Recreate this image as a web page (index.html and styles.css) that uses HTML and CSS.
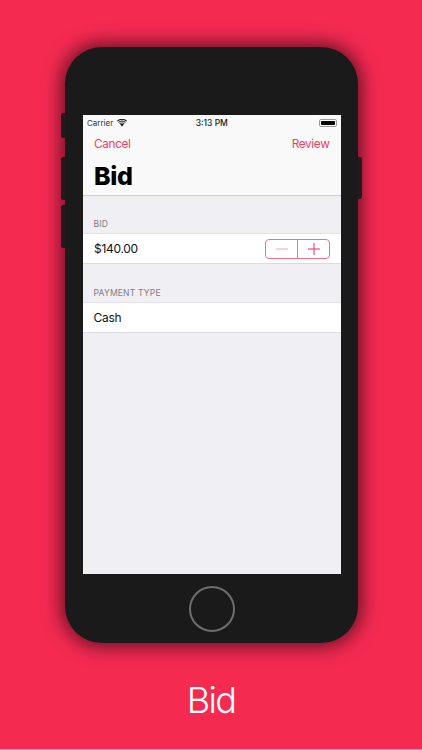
FILE: index.html
```html
<!DOCTYPE html>
<html lang="en">
<head>
<meta charset="utf-8">
<title>Bid</title>
<link rel="stylesheet" href="styles.css">
</head>
<body>
<main class="stage">
  <div class="phone">
    <span class="side side-mute"></span>
    <span class="side side-up"></span>
    <span class="side side-down"></span>
    <span class="side side-power"></span>
    <div class="screen">
      <header class="topbar">
        <div class="status">
          <div class="status-left">
            <span>Carrier</span>
            <svg class="wifi" viewBox="0 0 12 9" width="10" height="8" aria-hidden="true">
              <path d="M6 8.8 3.9 6.3a3.2 3.2 0 0 1 4.2 0z" fill="#111"/>
              <path d="M2.9 5.1a4.8 4.8 0 0 1 6.2 0l-.7.8a3.7 3.7 0 0 0-4.8 0z" fill="#111"/>
              <path d="M1.4 3.4a7 7 0 0 1 9.2 0l-.8.9a5.8 5.8 0 0 0-7.6 0z" fill="#111"/>
              <path d="M0 1.8a9.1 9.1 0 0 1 12 0l-.7.9a8 8 0 0 0-10.6 0z" fill="#111"/>
            </svg>
          </div>
          <span class="time">3:13 PM</span>
          <div class="status-right">
            <span class="battery"><span class="battery-fill"></span></span>
          </div>
        </div>
        <nav class="nav">
          <a class="link">Cancel</a>
          <a class="link">Review</a>
        </nav>
        <h1 class="title">Bid</h1>
      </header>
      <section class="section section-first">
        <h2 class="section-label">BID</h2>
        <div class="row">
          <span class="row-text row-text-bid">$140.00</span>
          <div class="stepper">
            <span class="step">
              <svg viewBox="0 0 12 12" width="12" height="12" aria-hidden="true"><path d="M0 6h12" stroke="#f4a3b5" stroke-width="1" fill="none"/></svg>
            </span>
            <span class="step step-plus">
              <svg viewBox="0 0 12 12" width="12" height="12" aria-hidden="true"><path d="M0 6h12M6 0v12" stroke="#e8305a" stroke-width="1" fill="none"/></svg>
            </span>
          </div>
        </div>
      </section>
      <section class="section section-second">
        <h2 class="section-label">PAYMENT TYPE</h2>
        <div class="row">
          <span class="row-text">Cash</span>
        </div>
      </section>
    </div>
    <div class="home-area"><span class="home"></span></div>
  </div>
  <p class="caption">Bid</p>
</main>
</body>
</html>
```
FILE: styles.css
```css
* { box-sizing: border-box; }
html, body { margin: 0; padding: 0; }
body {
  width: 422px;
  height: 750px;
  overflow: hidden;
  font-family: Inter, "Liberation Sans", sans-serif;
}
.stage {
  width: 422px;
  height: 750px;
  background: #f42a51;
  padding-top: 47px;
  display: flex;
  flex-direction: column;
  align-items: flex-start;
  border-bottom: 1px solid #c9b9be;
}
.phone {
  position: relative;
  width: 293px;
  height: 596px;
  margin-left: 65px;
  padding: 68px 17.5px 0;
  background: #1a1a1a;
  border-radius: 37px;
  box-shadow: 0 0 18px 4px rgba(50, 8, 22, .72);
  display: flex;
  flex-direction: column;
}
.side {
  position: absolute;
  background: #241a1d;
  width: 4px;
}
.side-mute { left: -4px; top: 66px; height: 25px; border-radius: 2px 0 0 2px; }
.side-up { left: -4px; top: 110px; height: 43px; border-radius: 2px 0 0 2px; }
.side-down { left: -4px; top: 158px; height: 43px; border-radius: 2px 0 0 2px; }
.side-power { right: -3.5px; top: 110px; height: 42px; border-radius: 0 2px 2px 0; }
.screen {
  height: 459px;
  background: #efeff4;
  display: flex;
  flex-direction: column;
  flex: none;
}
.topbar {
  height: 81px;
  background: #f9f9f9;
  border-bottom: 1px solid #c9c9ce;
  flex: none;
}
.status {
  height: 15px;
  padding: 0 4px 0 4.5px;
  display: grid;
  grid-template-columns: 1fr auto 1fr;
  align-items: center;
  font-size: 8px;
  color: #333;
}
.status-left { display: flex; align-items: center; gap: 4px; }
.time { font-size: 8.5px; font-weight: 500; color: #222; }
.status-right { display: flex; justify-content: flex-end; }
.battery {
  width: 18px;
  height: 8px;
  padding: 1px;
  border: 1px solid #9a9a9a;
  border-radius: 2px;
  display: flex;
}
.battery-fill { flex: 1; background: #000; border-radius: 1px; }
.nav {
  display: flex;
  justify-content: space-between;
  padding: 7px 11px 0 11.5px;
  height: 30px;
}
.link { font-size: 11.8px; line-height: 15px; letter-spacing: -.35px; color: #ee3f66; }
.title {
  margin: 0;
  padding: 1px 0 0 11.5px;
  font-size: 25px;
  line-height: 30px;
  font-weight: 800;
  color: #000;
  letter-spacing: -.4px;
}
.section { flex: none; }
.section-first { margin-top: 21px; }
.section-second { margin-top: 22px; }
.section-label {
  margin: 0 0 2px;
  padding: 0 0 0 11px;
  font-size: 8.5px;
  line-height: 14px;
  font-weight: 400;
  letter-spacing: .2px;
  color: #7d7d82;
}
.row {
  height: 31px;
  background: #fff;
  border-top: 1px solid #e2e2e6;
  border-bottom: 1px solid #dcdce0;
  display: flex;
  align-items: center;
  justify-content: space-between;
  padding: 0 10.5px 0 11px;
}
.row-text { font-size: 12px; letter-spacing: -.3px; color: #111; }
.row-text-bid { padding-left: .5px; }
.stepper {
  display: flex;
  width: 65px;
  height: 20px;
  border: 1px solid #ee6f8a;
  border-radius: 4px;
}
.step {
  flex: 1;
  display: flex;
  align-items: center;
  justify-content: center;
}
.step-plus { border-left: 1px solid #ee6f8a; }
.home-area {
  flex: 1;
  display: flex;
  align-items: center;
  justify-content: center;
}
.home {
  width: 46px;
  height: 46px;
  border: 2px solid #6e6e6e;
  border-radius: 50%;
}
.caption {
  margin: 35px 0 0;
  width: 100%;
  text-align: center;
  font-size: 36px;
  line-height: 44px;
  font-weight: 300;
  letter-spacing: -1.6px;
  color: #fff;
}
```
